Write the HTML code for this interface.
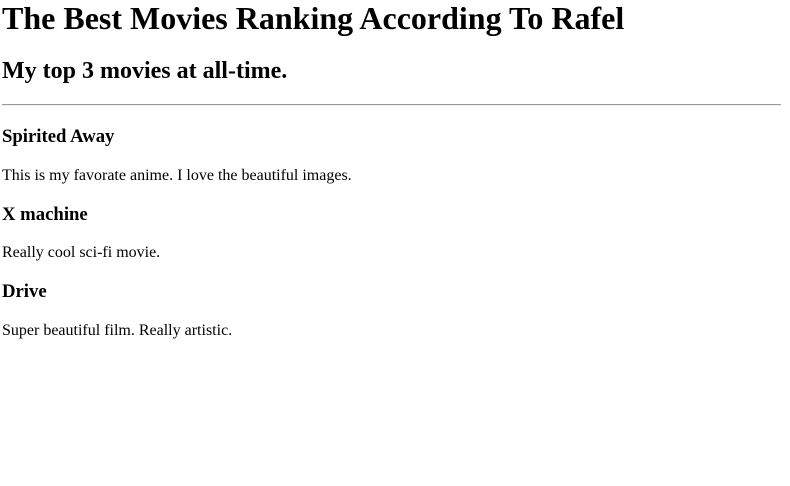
<!DOCTYPE html>
<html>
<head>
<meta charset="utf-8">
<style>
html,body{margin:0;padding:0;background:#fff;}
body{margin:0 2px;font-family:"Liberation Serif",serif;color:#000;width:786px;}
h1{font-size:32px;margin:0 0 21.44px 0;}
h2{font-size:24px;margin:19.92px 0 19px 0;}
h3{font-size:18.72px;margin:18.72px 0;}
hr + h3{margin-top:19.72px;}
p{font-size:16px;margin:16px 0;}
hr{width:779px;margin:8px 0 8px 0;border:none;border-top:1px solid #9a9a9a;border-bottom:1px solid #eee;height:0;}
</style>
</head>
<body>
<h1>The Best Movies Ranking According To Rafel</h1>
<h2>My top 3 movies at all-time.</h2>
<hr>
<h3>Spirited Away</h3>
<p>This is my favorate anime. I love the beautiful images.</p>
<h3>X machine</h3>
<p>Really cool sci-fi movie.</p>
<h3>Drive</h3>
<p>Super beautiful film. Really artistic.</p>
</body>
</html>
